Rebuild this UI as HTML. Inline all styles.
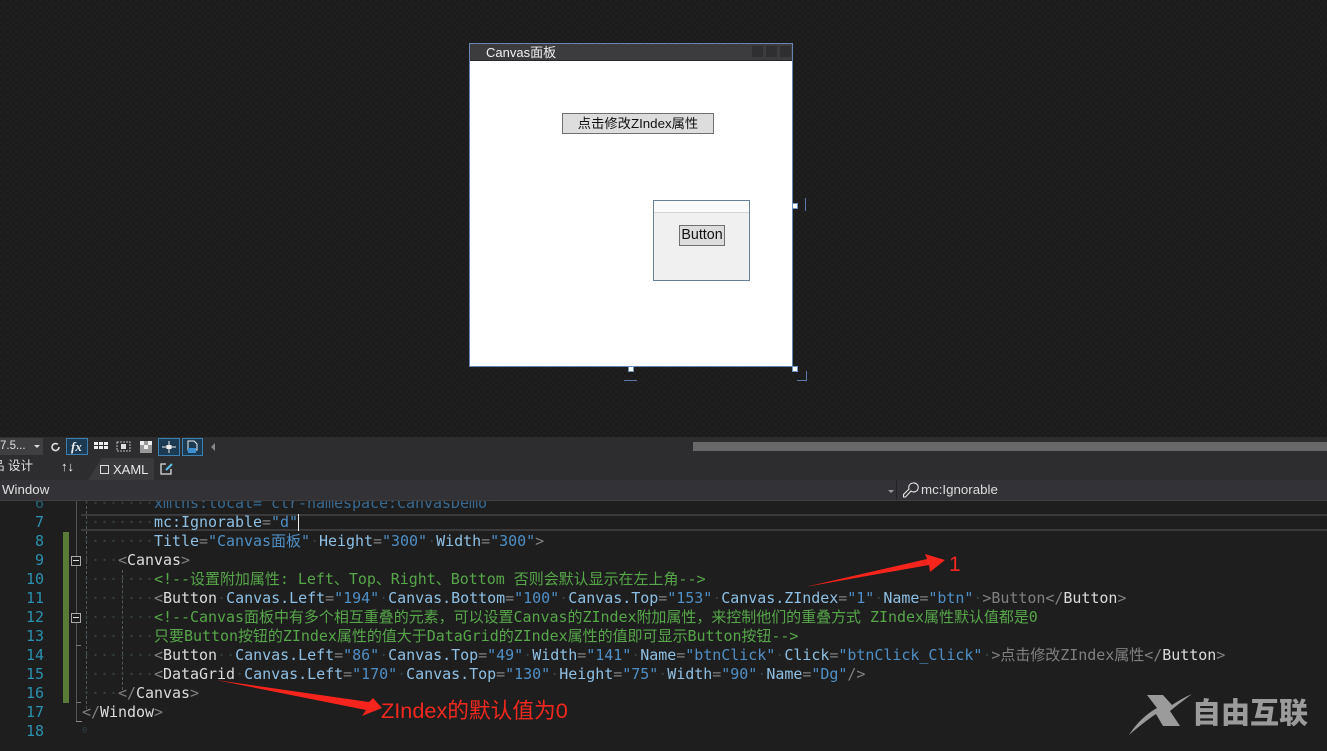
<!DOCTYPE html>
<html><head><meta charset="utf-8">
<style>
html,body{margin:0;padding:0;background:#1e1e1e}
#r{position:relative;width:1327px;height:751px;overflow:hidden;background:#1e1e1e;font-family:"Liberation Sans","Noto Sans CJK SC",sans-serif}
.a{position:absolute}
#top{left:0;top:0;width:1327px;height:437px;background-color:#1b1b1b;background-image:linear-gradient(45deg,#1f1f1f 25%,transparent 25%,transparent 75%,#1f1f1f 75%),linear-gradient(45deg,#1f1f1f 25%,transparent 25%,transparent 75%,#1f1f1f 75%);background-size:6px 6px;background-position:0 0,3px 3px}
.l{position:absolute;left:82px;height:19px;font:15px/19px "DejaVu Sans Mono","Noto Sans CJK SC",monospace;letter-spacing:-.03px;white-space:pre;color:#c8c8c8}
.n{position:absolute;left:20px;width:24px;text-align:right;font:15px/19px "DejaVu Sans Mono",monospace;color:#2b91af}
.d{color:#334046}.g{color:#808080}.w{color:#dcdcdc}.b{color:#8fc0e4}.s{color:#4f8fc6}.c{color:#57a64a}
.h{position:absolute;width:4px;height:4px;background:#fff;border:1px solid #6f93c4}
</style></head><body><div id="r">
<div class="a" id="top"></div>

<!-- design window -->
<div class="a" style="left:469px;top:43px;width:322px;height:322px;background:#fff;border:1px solid #6785b5"></div>
<div class="a" style="left:470px;top:44px;width:322px;height:16px;background:#3c3c3f;border-bottom:1px solid #2a2a2c;box-sizing:border-box;height:17px"></div>
<div class="a" style="left:486px;top:44px;font-size:13px;line-height:17px;color:#f0f0f0">Canvas面板</div>
<div class="a" style="left:752px;top:46px;width:11px;height:11px;background:#2f2f31"></div>
<div class="a" style="left:766px;top:46px;width:11px;height:11px;background:#2f2f31"></div>
<div class="a" style="left:780px;top:46px;width:11px;height:11px;background:#2f2f31"></div>
<div class="a" style="left:562px;top:113px;width:150px;height:19px;background:#dddddd;border:1px solid #707070;text-align:center;font-size:13.300px;line-height:19px;color:#111">点击修改ZIndex属性</div>
<div class="a" style="left:653px;top:200px;width:95px;height:79px;background:#f0f0f0;border:1px solid #688096"></div>
<div class="a" style="left:654px;top:201px;width:95px;height:11px;background:#fafafa;border-bottom:1px solid #d6d6d6"></div>
<div class="a" style="left:679px;top:225px;width:44px;height:19px;background:#dddddd;border:1px solid #707070;text-align:center;font-size:14.300px;line-height:19px;color:#111">Button</div>
<div class="h" style="left:792px;top:203px"></div>
<div class="h" style="left:628px;top:366px"></div>
<div class="h" style="left:792px;top:366px"></div>
<div class="a" style="left:805px;top:198px;width:1px;height:13px;background:#5a78a8"></div>
<div class="a" style="left:624px;top:380px;width:13px;height:1px;background:#5a78a8"></div>
<div class="a" style="left:797px;top:371px;width:9px;height:9px;border-right:1px solid #5a78a8;border-bottom:1px solid #5a78a8"></div>

<!-- toolbar -->
<div class="a" style="left:0;top:437px;width:1327px;height:19px;background:#2d2d30"></div>
<div class="a" style="left:0;top:438px;width:43px;height:17px;background:#3f3f42;font-size:11.500px;line-height:17px;color:#e0e0e0">7.5...</div>
<div class="a" style="left:34px;top:445px;width:0;height:0;border:3px solid transparent;border-top-color:#ddd"></div>
<svg class="a" style="left:48px;top:437px" width="170" height="19" viewBox="0 -3 170 19">
<path d="M11 7a3.500 3.500 0 1 1-1.200-2.600" fill="none" stroke="#ddd" stroke-width="1.600"/>
<rect x="18.500" y="-1.500" width="21" height="16" fill="#1c3a52" stroke="#3c7fb1"/>
<text x="23" y="11" font-family="Liberation Serif" font-style="italic" font-weight="bold" font-size="13" fill="#eee">fx</text>
<rect x="46" y="2" width="4" height="3" fill="#eee"/><rect x="51" y="2" width="4" height="3" fill="#eee"/><rect x="56" y="2" width="4" height="3" fill="#eee"/>
<rect x="46" y="6" width="4" height="3" fill="#eee"/><rect x="51" y="6" width="4" height="3" fill="#eee"/><rect x="56" y="6" width="4" height="3" fill="#eee"/>
<rect x="69" y="2" width="13" height="9" fill="none" stroke="#bbb" stroke-dasharray="2 1"/><rect x="73" y="4" width="5" height="5" fill="#ddd"/>
<rect x="92" y="1" width="12" height="12" fill="#999"/><rect x="92" y="1" width="4" height="4" fill="#eee"/><rect x="100" y="1" width="4" height="4" fill="#eee"/><rect x="96" y="5" width="4" height="4" fill="#eee"/>
<rect x="110.500" y="-1.500" width="21" height="17" fill="#1c3a52" stroke="#3c7fb1"/>
<path d="M114 7h14M121 1v12" stroke="#eee"/><rect x="118.500" y="5" width="5" height="4" fill="#eee"/>
<rect x="134.500" y="-1.500" width="20" height="17" fill="#1c3a52" stroke="#3c7fb1"/>
<path d="M140 1h6l3 3v6h-9z" fill="none" stroke="#eee"/><rect x="140" y="8" width="8" height="5" fill="#3c8fd0"/>
<path d="M167 3v8l-4-4z" fill="#888"/>
</svg>
<div class="a" style="left:693px;top:442px;width:634px;height:9px;background:#686868"></div>

<!-- tab row -->
<div class="a" style="left:0;top:456px;width:1327px;height:24px;background:#2d2d30"></div>
<div class="a" style="left:-8px;top:457px;font-size:12.500px;line-height:18px;color:#e0e0e0">品 设计</div>
<div class="a" style="left:61px;top:458px;font-size:13px;line-height:18px;color:#f0f0f0">↑↓</div>
<div class="a" style="left:88px;top:458px;width:66px;height:22px;background:#3a3a3d;clip-path:polygon(14px 0,100% 0,100% 100%,0 100%)"></div>
<div class="a" style="left:100px;top:465px;width:7px;height:7px;border:1px solid #ddd"></div>
<div class="a" style="left:113px;top:461px;font-size:13px;line-height:17px;color:#e8e8e8">XAML</div>
<svg class="a" style="left:160px;top:462px" width="14" height="14"><path d="M6 2H1v10h10V7" fill="none" stroke="#ddd" stroke-width="1.300"/><path d="M6 8l6-6" stroke="#5cc0e8" stroke-width="2"/></svg>

<!-- editor -->
<div class="a" style="left:0;top:501px;width:1327px;height:250px;background:#1e1e1e"></div>
<div class="a" style="left:81px;top:514px;width:1246px;height:17px;border:solid #3a3a3c;border-width:2px 0;box-sizing:border-box"></div>
<div class="a" style="left:63px;top:532px;width:6px;height:171px;background:#5a7a37"></div>
<div class="a" style="left:76px;top:501px;width:1px;height:220px;background:#555"></div>
<div class="a" style="left:76px;top:721px;width:6px;height:1px;background:#888"></div>
<div class="a" style="left:76px;top:645px;width:5px;height:1px;background:#777"></div>
<div class="a" style="left:76px;top:702px;width:5px;height:1px;background:#777"></div>
<div class="a" style="left:71px;top:556px;border:1px solid #aaa;background:#1e1e1e;box-sizing:border-box;width:10px;height:10px"></div>
<div class="a" style="left:73px;top:560px;width:6px;height:1px;background:#ddd"></div>
<div class="a" style="left:71px;top:613px;border:1px solid #aaa;background:#1e1e1e;box-sizing:border-box;width:10px;height:10px"></div>
<div class="a" style="left:73px;top:617px;width:6px;height:1px;background:#ddd"></div>
<div class="a" style="left:86px;top:501px;height:208px;border-left:1px dashed #55585a"></div>
<div class="a" style="left:122px;top:570px;height:120px;border-left:1px dashed #55585a"></div>

<div class="n" style="top:494px;color:#235f72;height:19px">6</div>
<div class="l" style="top:494px;color:#3a6a90"><span style="color:#30393d">········</span>xmlns:local="clr-namespace:CanvasDemo"</div>

<!-- nav bar -->
<div class="a" style="left:0;top:480px;width:1327px;height:21px;background:#333337;border-bottom:1px solid #3f3f42;box-sizing:border-box"></div>
<div class="a" style="left:2px;top:481px;font-size:13.300px;line-height:18px;color:#e0e0e0">Window</div>
<div class="a" style="left:896px;top:480px;width:1px;height:20px;background:#242426"></div>
<div class="a" style="left:888px;top:490px;width:0;height:0;border:3px solid transparent;border-top-color:#999"></div>
<svg class="a" style="left:902px;top:481px" width="18" height="18" viewBox="0 0 18 18"><path d="M11 2a4.500 4.500 0 1 1-2 8L3.500 16H1.500v-2.500L7 8a4.500 4.500 0 0 1 4-6z" fill="none" stroke="#e6e6e6" stroke-width="1.100"/></svg>
<div class="a" style="left:921px;top:481px;font-size:13.300px;line-height:18px;color:#dcdcdc">mc:Ignorable</div>

<div class="n" style="top:513px">7</div>
<div class="l" style="top:513px"><span class="d">········</span><span class="b">mc:Ignorable</span><span class="g">=</span><span class="s">"d"</span></div>
<div class="a" style="left:298px;top:514px;width:1px;height:17px;background:#eee"></div>
<div class="n" style="top:532px">8</div>
<div class="l" style="top:532px"><span class="d">········</span><span class="b">Title</span><span class="g">=</span><span class="s">"Canvas面板"</span><span class="d">·</span><span class="b">Height</span><span class="g">=</span><span class="s">"300"</span><span class="d">·</span><span class="b">Width</span><span class="g">=</span><span class="s">"300"</span><span class="g">&gt;</span></div>
<div class="n" style="top:551px">9</div>
<div class="l" style="top:551px"><span class="d">····</span><span class="g">&lt;</span><span class="w">Canvas</span><span class="g">&gt;</span></div>
<div class="n" style="top:570px">10</div>
<div class="l" style="top:570px"><span class="d">········</span><span class="c">&lt;!--设置附加属性: Left、Top、Right、Bottom 否则会默认显示在左上角--&gt;</span></div>
<div class="n" style="top:589px">11</div>
<div class="l" style="top:589px"><span class="d">········</span><span class="g">&lt;</span><span class="w">Button</span><span class="d">·</span><span class="b">Canvas.Left</span><span class="g">=</span><span class="s">"194"</span><span class="d">·</span><span class="b">Canvas.Bottom</span><span class="g">=</span><span class="s">"100"</span><span class="d">·</span><span class="b">Canvas.Top</span><span class="g">=</span><span class="s">"153"</span><span class="d">·</span><span class="b">Canvas.ZIndex</span><span class="g">=</span><span class="s">"1"</span><span class="d">·</span><span class="b">Name</span><span class="g">=</span><span class="s">"btn"</span><span class="d">·</span><span class="g">&gt;Button&lt;/</span><span class="w">Button</span><span class="g">&gt;</span></div>
<div class="n" style="top:608px">12</div>
<div class="l" style="top:608px"><span class="d">········</span><span class="c">&lt;!--Canvas面板中有多个相互重叠的元素，可以设置Canvas的ZIndex附加属性，来控制他们的重叠方式 ZIndex属性默认值都是0</span></div>
<div class="n" style="top:627px">13</div>
<div class="l" style="top:627px"><span class="d">········</span><span class="c">只要Button按钮的ZIndex属性的值大于DataGrid的ZIndex属性的值即可显示Button按钮--&gt;</span></div>
<div class="n" style="top:646px">14</div>
<div class="l" style="top:646px"><span class="d">········</span><span class="g">&lt;</span><span class="w">Button</span><span class="d">··</span><span class="b">Canvas.Left</span><span class="g">=</span><span class="s">"86"</span><span class="d">·</span><span class="b">Canvas.Top</span><span class="g">=</span><span class="s">"49"</span><span class="d">·</span><span class="b">Width</span><span class="g">=</span><span class="s">"141"</span><span class="d">·</span><span class="b">Name</span><span class="g">=</span><span class="s">"btnClick"</span><span class="d">·</span><span class="b">Click</span><span class="g">=</span><span class="s">"btnClick_Click"</span><span class="d">·</span><span class="g">&gt;点击修改ZIndex属性&lt;/</span><span class="w">Button</span><span class="g">&gt;</span></div>
<div class="n" style="top:665px">15</div>
<div class="l" style="top:665px"><span class="d">········</span><span class="g">&lt;</span><span class="w">DataGrid</span><span class="d">·</span><span class="b">Canvas.Left</span><span class="g">=</span><span class="s">"170"</span><span class="d">·</span><span class="b">Canvas.Top</span><span class="g">=</span><span class="s">"130"</span><span class="d">·</span><span class="b">Height</span><span class="g">=</span><span class="s">"75"</span><span class="d">·</span><span class="b">Width</span><span class="g">=</span><span class="s">"90"</span><span class="d">·</span><span class="b">Name</span><span class="g">=</span><span class="s">"Dg"</span><span class="g">/&gt;</span></div>
<div class="n" style="top:684px">16</div>
<div class="l" style="top:684px"><span class="d">····</span><span class="g">&lt;/</span><span class="w">Canvas</span><span class="g">&gt;</span></div>
<div class="n" style="top:703px">17</div>
<div class="l" style="top:703px"><span class="g">&lt;/</span><span class="w">Window</span><span class="g">&gt;</span></div>
<div class="n" style="top:722px">18</div>
<div class="l" style="top:722px;color:#2f3f48;font-size:9px">0</div>

<!-- annotations -->
<svg class="a" style="left:0;top:0" width="1327" height="751">
<polygon points="805,587 927,559 925,554 945,560 930,572 929,565" fill="#f5241c"/>
<polygon points="216,680 369,702 373,698 382,708 362,716 366,710" fill="#f5241c"/>
</svg>
<div class="a" style="left:949px;top:553px;font-size:21px;line-height:24px;color:#f0281e">1</div>
<div class="a" style="left:381px;top:698px;font-size:21.700px;line-height:26px;color:#f0281e;white-space:nowrap">ZIndex的默认值为0</div>

<!-- watermark -->
<svg class="a" style="left:1128px;top:692px" width="70" height="46" viewBox="0 0 70 46">
<path d="M19 3h16l9 10C50 9 57 5 64 2 56 8 48 14 42 19l10 15H35l-7-12C19 28 9 36 1 43 8 32 18 22 29 16z" fill="#9b9b9b"/>
</svg>
<div class="a" style="left:1192px;top:692px;font:900 29px/38px 'Noto Sans CJK SC',sans-serif;color:#9b9b9b;white-space:nowrap">自由互联</div>
</div></body></html>
